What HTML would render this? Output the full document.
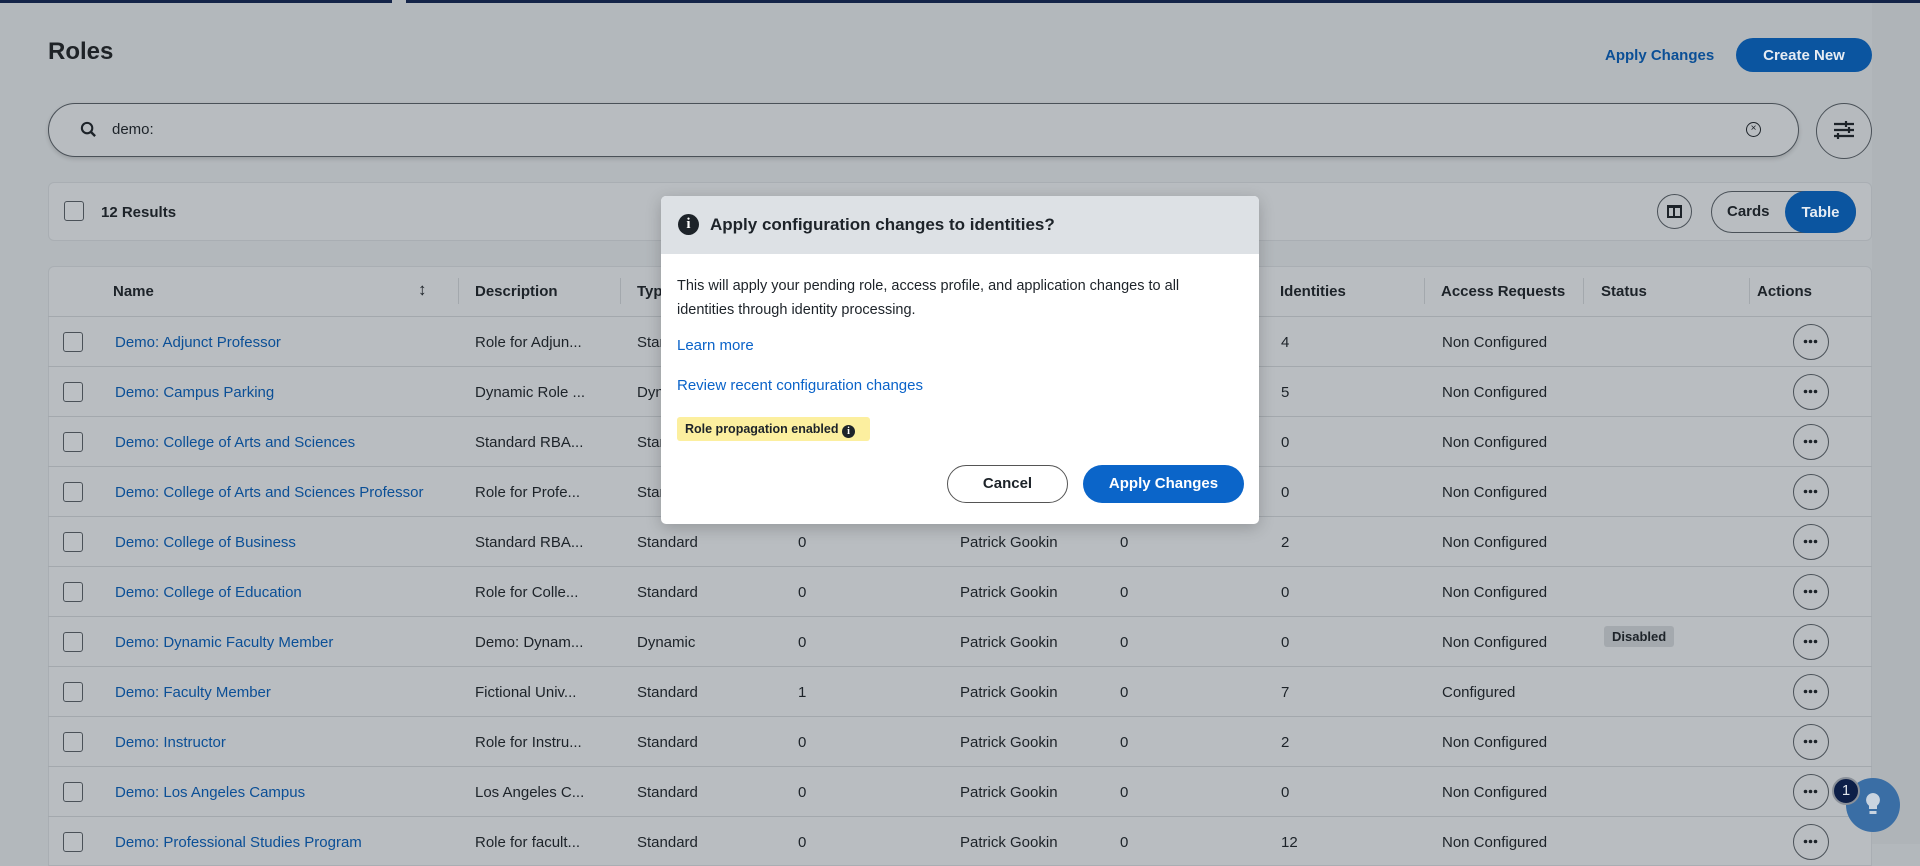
<!DOCTYPE html>
<html><head><meta charset="utf-8"><style>
*{box-sizing:border-box;margin:0;padding:0}
body{width:1920px;height:844px;overflow:hidden;background:#b3b8bc;font-family:"Liberation Sans",sans-serif;color:#1d2329;position:relative}
.a{position:absolute}
.topbar{left:0;top:0;height:3px;width:1920px;background:#142448;z-index:2}
.title{left:48px;top:38px;font-size:24px;font-weight:bold;color:#1f2327}
.link{color:#0b4f96;font-weight:bold}
.btnp{background:#0b55a0;color:#e6ecf3;border-radius:20px;font-weight:bold;font-size:16px;display:flex;align-items:center;justify-content:center}
.search{left:48px;top:103px;width:1751px;height:54px;border:1.5px solid #4a5158;border-radius:27px;background:#b8bcc0;box-shadow:0 2px 4px rgba(0,0,0,.15)}
.circ{border:1.5px solid #4a5158;border-radius:50%}
.bar{left:48px;top:182px;width:1824px;height:59px;background:#b9bdc1;border:1px solid #a9aeb3;border-radius:6px}
.cb{width:20px;height:20px;border:1.5px solid #4a5158;border-radius:3px;background:#bcc0c4}
.table{left:48px;top:266px;width:1824px;height:600px;background:#b9bdc1;border:1px solid #a9aeb3;border-radius:6px 6px 0 0}
.row{position:absolute;left:48px;width:1824px;height:50px;border-top:1px solid #a3a8ad;font-size:15px}
.row span{position:absolute;top:17px;white-space:nowrap}
.hd span{font-weight:bold}
.nm{color:#0b4f96}
.more{position:absolute;left:1745px;top:7px;width:36px;height:36px;border:1.5px solid #4a5158;border-radius:50%}
.div{position:absolute;top:12px;width:1px;height:26px;background:#a3a8ad}
.modal{left:661px;top:196px;width:598px;height:328px;background:#fff;border-radius:5px;overflow:hidden;box-shadow:0 4px 16px rgba(0,0,0,.2)}
.mh{height:58px;background:#dde1e5;position:relative}
.icon{width:21px;height:21px;border-radius:50%;background:#1d2329;color:#fff;font-weight:bold;font-family:"Liberation Serif",serif;font-size:15px;text-align:center;line-height:21px}
</style></head><body>
<div class="a topbar"></div>
<div class="a" style="left:392px;top:0;width:14px;height:4px;background:#b3b8bc;z-index:3"></div>
<div class="a" style="left:1872px;top:3px;width:48px;height:841px;background:#afb4b8"></div>
<div class="a title">Roles</div>
<div class="a link" style="left:1605px;top:47px;font-size:15px">Apply Changes</div>
<div class="a btnp" style="left:1736px;top:38px;width:136px;height:34px;font-size:15px">Create New</div>

<div class="a search"></div>
<svg class="a" style="left:80px;top:121px" width="17" height="17" viewBox="0 0 18 18"><circle cx="7.5" cy="7.5" r="5.5" fill="none" stroke="#1d2329" stroke-width="2.2"/><line x1="11.5" y1="11.5" x2="16" y2="16" stroke="#1d2329" stroke-width="2.5"/></svg>
<div class="a" style="left:112px;top:121px;font-size:15px">demo:</div>
<div class="a circ" style="left:1746px;top:122px;width:15px;height:15px;border-width:1.2px;border-color:#1d2329;font-size:10px;text-align:center;line-height:12px">×</div>
<div class="a circ" style="left:1816px;top:103px;width:56px;height:56px;background:#b6babe"></div>
<svg class="a" style="left:1832px;top:118px" width="24" height="24" viewBox="0 0 24 24" stroke="#1d2329" stroke-width="2.2"><line x1="2" y1="6" x2="22" y2="6"/><line x1="2" y1="12" x2="22" y2="12"/><line x1="2" y1="18" x2="22" y2="18"/><line x1="14" y1="3" x2="14" y2="9"/><line x1="17" y1="9" x2="17" y2="15"/><line x1="6" y1="15" x2="6" y2="21"/></svg>

<div class="a bar"></div>
<div class="a cb" style="left:64px;top:201px"></div>
<div class="a" style="left:101px;top:204px;font-size:15px;font-weight:bold">12 Results</div>
<div class="a circ" style="left:1657px;top:194px;width:35px;height:35px"></div>
<div class="a" style="left:1667px;top:205px;width:15px;height:13px;border:2px solid #1d2329;border-top-width:3px"><div style="margin-left:4px;width:2px;height:8px;background:#1d2329"></div></div>
<div class="a" style="left:1711px;top:191px;width:145px;height:42px;border:1.5px solid #4a5158;border-radius:21px"></div>
<div class="a" style="left:1727px;top:203px;font-size:15px;font-weight:bold">Cards</div>
<div class="a btnp" style="left:1785px;top:191px;width:71px;height:42px;border-radius:21px;font-size:15px">Table</div>

<div class="a table"></div>
<div class="row hd" style="top:266px;border-top:none">
<span style="left:65px">Name</span><span style="left:370px;font-weight:normal;font-size:17px;top:14px">↕</span><div class="div" style="left:410px"></div>
<span style="left:427px">Description</span><div class="div" style="left:572px"></div>
<span style="left:589px">Type</span>
<span style="left:1232px">Identities</span><div class="div" style="left:1376px"></div>
<span style="left:1393px">Access Requests</span><div class="div" style="left:1535px"></div>
<span style="left:1553px">Status</span><div class="div" style="left:1701px"></div>
<span style="left:1709px">Actions</span>
</div>

<div id="rows"></div>
<script>
var d=[["Adjunct Professor","Role for Adjun...","Standard","0","4","Non Configured"],
["Campus Parking","Dynamic Role ...","Dynamic","0","5","Non Configured"],
["College of Arts and Sciences","Standard RBA...","Standard","0","0","Non Configured"],
["College of Arts and Sciences Professor","Role for Profe...","Standard","0","0","Non Configured"],
["College of Business","Standard RBA...","Standard","0","2","Non Configured"],
["College of Education","Role for Colle...","Standard","0","0","Non Configured"],
["Dynamic Faculty Member","Demo: Dynam...","Dynamic","0","0","Non Configured"],
["Faculty Member","Fictional Univ...","Standard","1","7","Configured"],
["Instructor","Role for Instru...","Standard","0","2","Non Configured"],
["Los Angeles Campus","Los Angeles C...","Standard","0","0","Non Configured"],
["Professional Studies Program","Role for facult...","Standard","0","12","Non Configured"]];
var h="";
d.forEach(function(r,i){
h+='<div class="row" style="top:'+(316+i*50)+'px"><div class="cb" style="position:absolute;left:15px;top:15px"></div>'+
'<span class="nm" style="left:67px">Demo: '+r[0]+'</span><span style="left:427px">'+r[1]+'</span><span style="left:589px">'+r[2]+'</span>'+
'<span style="left:750px">'+r[3]+'</span><span style="left:912px">Patrick Gookin</span><span style="left:1072px">0</span>'+
'<span style="left:1233px">'+r[4]+'</span><span style="left:1394px">'+r[5]+'</span>'+
(i==6?'<span style="left:1556px;top:9px;background:#a4a9ae;border-radius:3px;padding:3px 8px;font-size:13px;font-weight:bold">Disabled</span>':'')+
'<div class="more"><svg width="33" height="33" viewBox="0 0 33 33" style="position:absolute;left:0;top:0"><circle cx="11.5" cy="16.5" r="1.8" fill="#1d2329"/><circle cx="16.5" cy="16.5" r="1.8" fill="#1d2329"/><circle cx="21.5" cy="16.5" r="1.8" fill="#1d2329"/></svg></div></div>';});
document.getElementById("rows").innerHTML=h;
</script>

<div class="a" style="left:1846px;top:778px;width:54px;height:54px;border-radius:50%;background:#3a6ea5"></div>
<svg class="a" style="left:1863px;top:791px" width="20" height="28" viewBox="0 0 20 28"><path d="M10 2a7 7 0 0 0-4 12.7V18h8v-3.3A7 7 0 0 0 10 2z" fill="#c9d4e0"/><rect x="6.5" y="20" width="7" height="3" fill="#c9d4e0"/></svg>
<div class="a" style="left:1832px;top:777px;width:28px;height:28px;border-radius:50%;background:#0d1f48;border:2px solid #8a9099;color:#dfe4ea;font-size:15px;text-align:center;line-height:24px">1</div>

<div class="a modal">
<div class="mh"><div class="a icon" style="left:17px;top:18px">i</div>
<div class="a" style="left:49px;top:19px;font-size:17px;font-weight:bold">Apply configuration changes to identities?</div></div>
<div class="a" style="left:16px;top:78px;width:560px;font-size:14.5px;line-height:24px">This will apply your pending role, access profile, and application changes to all identities through identity processing.</div>
<div class="a" style="left:16px;top:141px;font-size:15px;color:#0a63c9">Learn more</div>
<div class="a" style="left:16px;top:181px;font-size:15px;color:#0a63c9">Review recent configuration changes</div>
<div class="a" style="left:16px;top:221px;width:193px;height:24px;background:#fcef9f;border-radius:3px;font-size:12.5px;font-weight:bold;padding:5px 0 0 8px;white-space:nowrap">Role propagation enabled <span class="icon" style="display:inline-block;width:13px;height:13px;line-height:13px;font-size:10px;vertical-align:-1px">i</span></div>
<div class="a" style="left:286px;top:269px;width:121px;height:38px;border:1.5px solid #555;border-radius:19px;text-align:center;line-height:35px;font-size:15px;font-weight:bold">Cancel</div>
<div class="a" style="left:422px;top:269px;width:161px;height:38px;border-radius:19px;background:#0b65c9;color:#fff;text-align:center;line-height:38px;font-size:15px;font-weight:bold">Apply Changes</div>
</div>
</body></html>
